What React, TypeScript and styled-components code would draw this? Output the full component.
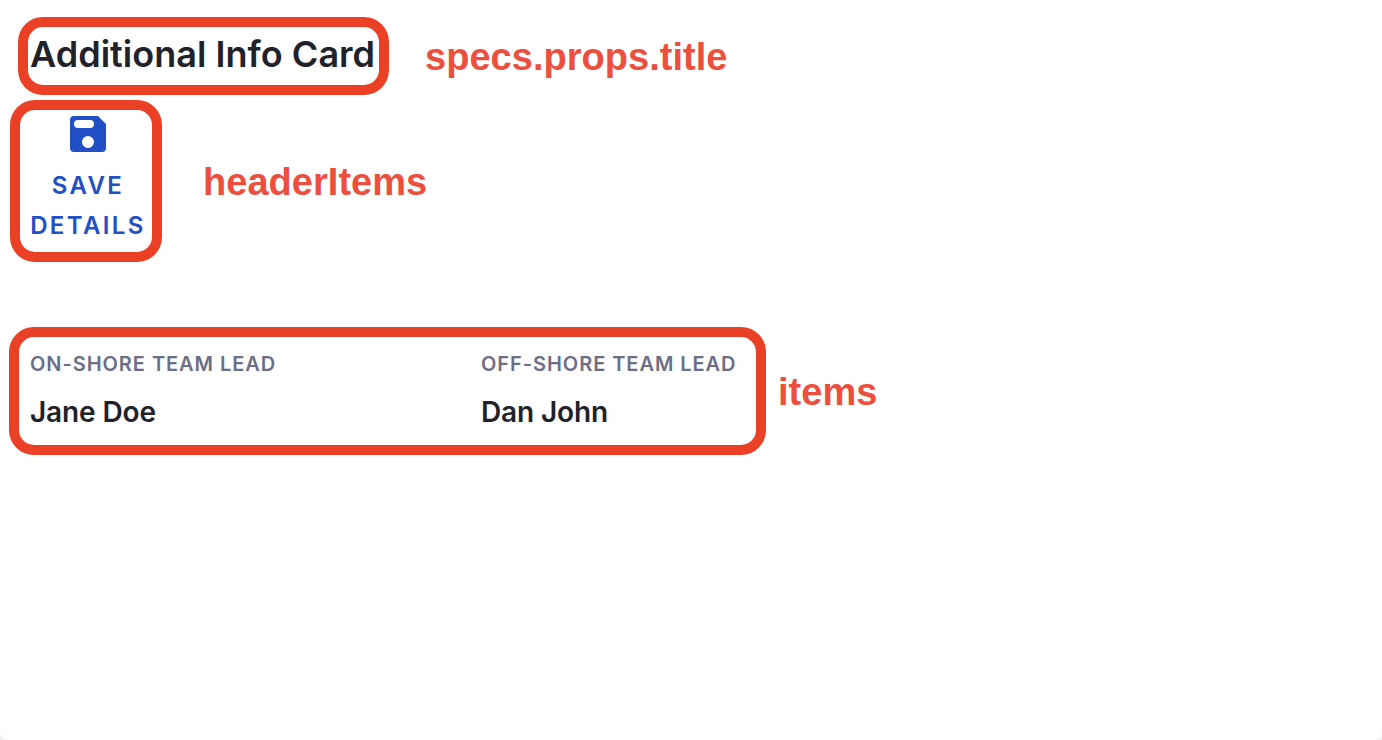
import React from "react";
import styled, { createGlobalStyle } from "styled-components";

const GlobalStyle = createGlobalStyle`
  * { box-sizing: border-box; }
  html { background: #f1f1f3; }
  body { margin: 0; font-family: Inter, "Liberation Sans", sans-serif; }
`;

const Card = styled.main`
  width: 1382px;
  height: 740px;
  padding: 17px 9px 0;
  background: #fff;
  border-radius: 0 0 8px 8px;
  overflow: hidden;
`;

const Row = styled.div<{ $indent?: number; $top?: number }>`
  display: flex;
  align-items: flex-start;
  margin-left: ${(p) => p.$indent ?? 0}px;
  margin-top: ${(p) => p.$top ?? 0}px;
`;

const Outline = styled.div<{ $w: number; $h: number }>`
  flex: none;
  width: ${(p) => p.$w}px;
  height: ${(p) => p.$h}px;
  border: 10px solid #ea4025;
  border-radius: 25px;
`;

const Note = styled.span<{ $left: number; $top: number }>`
  margin-left: ${(p) => p.$left}px;
  margin-top: ${(p) => p.$top}px;
  font: bold 38px/44px "Liberation Sans", sans-serif;
  letter-spacing: 0.03px;
  color: #ed4f3e;
  white-space: nowrap;
`;

const Title = styled.h1`
  margin: 3px 0 0 2px;
  font-size: 36px;
  line-height: 48px;
  font-weight: 600;
  letter-spacing: 0.03px;
  color: #212229;
  white-space: nowrap;
`;

const HeaderItems = styled(Outline)`
  padding-top: 6px;
`;

const SaveButton = styled.button`
  display: flex;
  flex-direction: column;
  align-items: center;
  width: 136px;
  margin: 0;
  padding: 0;
  border: 0;
  background: none;
  font: 600 24px/40px Inter, "Liberation Sans", sans-serif;
  letter-spacing: 2.4px;
  color: #2150c6;
  svg { display: block; margin: 0 0 14px; }
`;

const Items = styled(Outline)`
  display: flex;
  padding: 12px 0 0 11px;
`;

const Item = styled.div`
  flex: none;
  width: 451px;
  white-space: nowrap;
`;

const Label = styled.div`
  font-size: 20px;
  line-height: 30px;
  font-weight: 600;
  letter-spacing: 0.95px;
  color: #6c6e88;
`;

const Value = styled.div`
  margin-top: 14px;
  font-size: 28px;
  line-height: 38px;
  font-weight: 600;
  letter-spacing: -0.12px;
  color: #212229;
`;

const SaveIcon = () => (
  <svg width="36" height="36" viewBox="0 0 36 36" fill="#2150c6">
    <path
      fillRule="evenodd"
      d="M4 0h24l8 8v24a4 4 0 0 1-4 4H4a4 4 0 0 1-4-4V4a4 4 0 0 1 4-4ZM8 4a4 4 0 0 0 0 8h12a4 4 0 0 0 0-8ZM18 20a6 6 0 1 0 0 12a6 6 0 0 0 0-12Z"
    />
  </svg>
);

export default function App() {
  return (
    <>
      <GlobalStyle />
      <Card>
        <Row $indent={9}>
          <Outline $w={371} $h={78}>
            <Title>Additional Info Card</Title>
          </Outline>
          <Note $left={36} $top={18}>specs.props.title</Note>
        </Row>
        <Row $indent={1} $top={5}>
          <HeaderItems $w={152} $h={162}>
            <SaveButton>
              <SaveIcon />
              <span>SAVE</span>
              <span>DETAILS</span>
            </SaveButton>
          </HeaderItems>
          <Note $left={41} $top={60}>headerItems</Note>
        </Row>
        <Row $top={65}>
          <Items $w={757} $h={128}>
            <Item>
              <Label>ON-SHORE TEAM LEAD</Label>
              <Value>Jane Doe</Value>
            </Item>
            <Item>
              <Label>OFF-SHORE TEAM LEAD</Label>
              <Value>Dan John</Value>
            </Item>
          </Items>
          <Note $left={12} $top={43}>items</Note>
        </Row>
      </Card>
    </>
  );
}
